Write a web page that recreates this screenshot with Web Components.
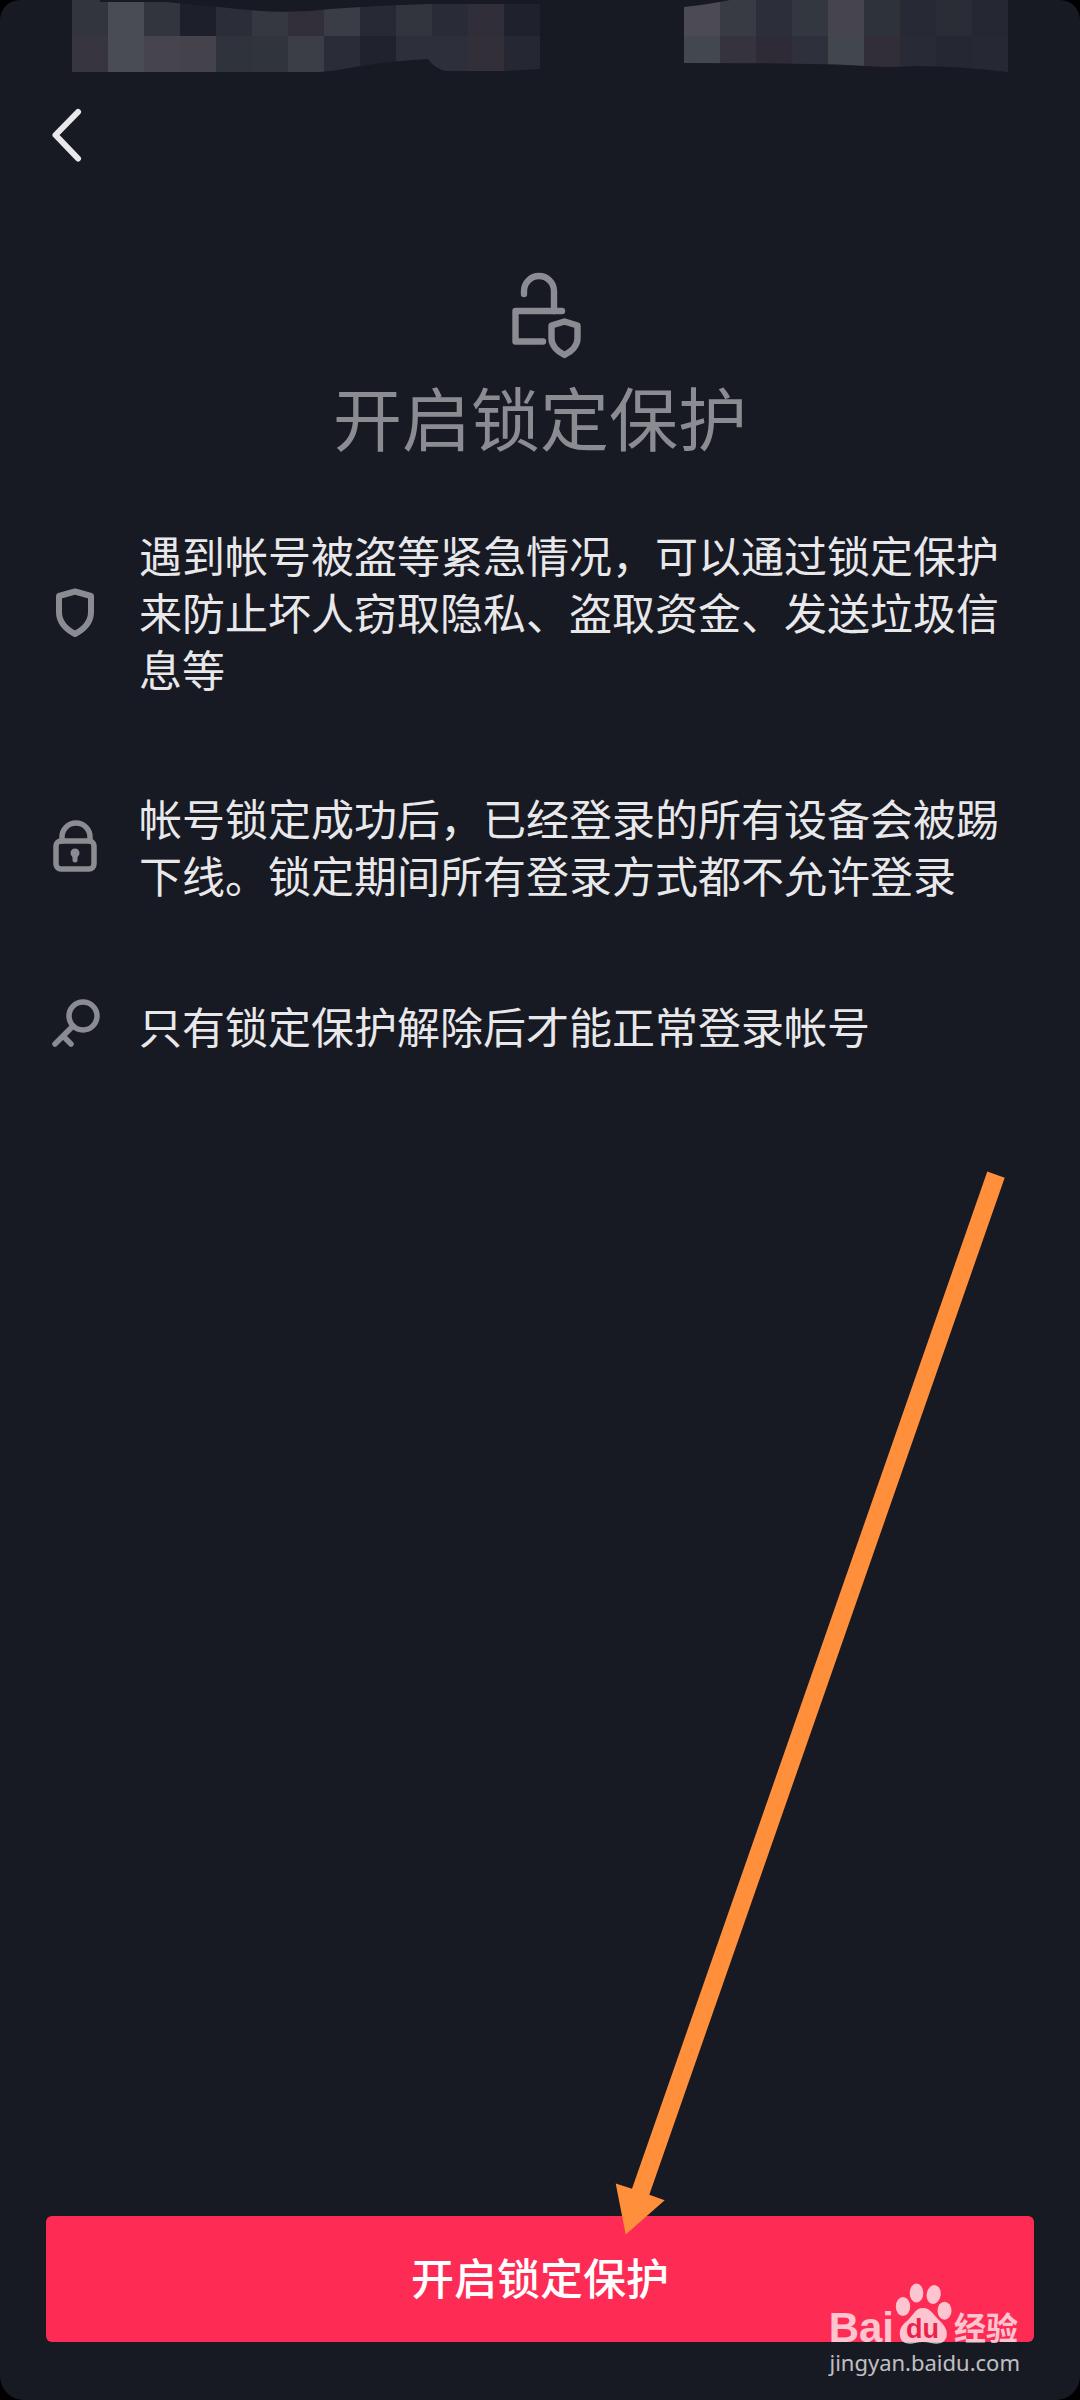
<!DOCTYPE html>
<html lang="zh-CN">
<head>
<meta charset="utf-8">
<meta name="viewport" content="width=device-width, initial-scale=1">
<title>开启锁定保护</title>
<style>
  html { background: #000; }
  body { margin: 0; min-height: 100vh; display: flex; font-family: "Noto Sans CJK SC", "Noto Sans", sans-serif; color: #e8e8ea; }
</style>
</head>
<body>
<lock-page>
  <status-strip slot="top"></status-strip>
  <back-bar slot="top"></back-bar>
  <page-hero>开启锁定保护</page-hero>
  <feature-list>
    <feature-item icon="shield">遇到帐号被盗等紧急情况，可以通过锁定保护来防止坏人窃取隐私、盗取资金、发送垃圾信息等</feature-item>
    <feature-item icon="lock">帐号锁定成功后，已经登录的所有设备会被踢下线。锁定期间所有登录方式都不允许登录</feature-item>
    <feature-item icon="key">只有锁定保护解除后才能正常登录帐号</feature-item>
  </feature-list>
  <action-button slot="bottom">开启锁定保护</action-button>
  <pointer-arrow slot="overlay"></pointer-arrow>
  <site-mark slot="overlay"></site-mark>
</lock-page>
<script>
const define = (name, html, setup) => customElements.define(name, class extends HTMLElement {
  constructor() {
    super();
    this.attachShadow({ mode: 'open' }).innerHTML = html;
  }
  connectedCallback() { if (setup) setup(this); }
});

define('lock-page', `
  <style>
    :host { position: relative; flex: 1; display: flex; flex-direction: column; min-width: 0; background: #171923; border-radius: 20px 20px 24px 24px; overflow: hidden; }
    main { flex: 1; }
    footer { padding: 0 46px 58px; }
  </style>
  <header><slot name="top"></slot></header>
  <main><slot></slot></main>
  <footer><slot name="bottom"></slot></footer>
  <slot name="overlay"></slot>`);

// Mosaic over the clock and the system icons: one colour per 36px cell, two rows.
const cells = (x, top, bottom) => [top, bottom].map((row, r) => row.map((c, i) =>
  `<rect x="${x + i * 36}" y="${r * 36}" width="36" height="36" fill="#${c}"/>`).join('')).join('');
define('status-strip', `
  <style>:host { display: block; } svg { display: block; width: 100%; height: auto; }</style>
  <svg viewBox="0 0 1080 80" shape-rendering="auto" aria-hidden="true">
    <defs>
      <clipPath id="l"><path d="M72 0H100V2H165Q220 7 250 10Q290 14 330 9Q380 5 430 4H540V69L505 71H446Q435 69 428 59Q390 61 355 67Q335 71 320 72H72Z"/></clipPath>
      <clipPath id="r"><path d="M684 7Q705 5 730 0H1008V72Q960 66 915 66Q890 68 865 66Q820 63 684 63Z"/></clipPath>
    </defs>
    <g clip-path="url(#l)">${cells(72,
      ['32353d','4a4c54','32353d','1d1f2a','2b2d38','353840','332f39','3a3d45','272a34','32353d','292b36','302e38','1f212c'],
      ['363540','4a4c54','46454e','44434c','2f333b','30343b','3b3e46','2a2c37','20232d','2d2f3a','2d2f3a','322f39','252833'])}</g>
    <g clip-path="url(#r)">${cells(684,
      ['4c4b54','383b43','2c2f3a','33373f','46444d','2e3239','272a34','2a2c36','252832'],
      ['434850','35333e','2e2b36','2e313c','42474e','312e38','282a35','252832','262933'])}</g>
  </svg>`);

define('back-bar', `
  <style>
    :host { display: flex; padding: 20px 36px; }
    button { display: flex; padding: 0; border: 0; background: none; color: #e8e8ea; cursor: pointer; }
    svg { display: block; }
  </style>
  <button type="button" aria-label="返回">
    <svg width="60" height="72" viewBox="0 0 60 72" fill="none" stroke="currentColor" stroke-width="6" stroke-linecap="round" stroke-linejoin="round"><path d="M42 12 19.500 35 42 58.500"/></svg>
  </button>`);

define('page-hero', `
  <style>
    :host { display: flex; flex-direction: column; align-items: center; gap: 2px; padding-top: 76px; color: #8b8c91; }
    svg { display: block; }
    h1 { margin: 0; font-size: 69px; line-height: 100px; font-weight: 400; }
  </style>
  <svg width="96" height="96" viewBox="0 0 96 96" fill="none" stroke="currentColor" stroke-width="6.400" stroke-linecap="round" stroke-linejoin="round" aria-hidden="true">
    <path d="M32 26v-3a15 15 0 0 1 30 0v20"/>
    <path d="M70 43H23.500V73.500H51"/>
    <path d="M72.500 53.500 85.500 57.500V70.500C85.500 77.500 79.500 83.500 72.500 87C65.500 83.500 59.500 77.500 59.500 70.500V57.500Z"/>
  </svg>
  <h1><slot></slot></h1>`);

define('feature-list', `
  <style>:host { display: flex; flex-direction: column; gap: 92px; padding: 60px 74px 0 45px; }</style>
  <slot></slot>`);

const icons = {
  shield: '<path stroke-width="6" d="M30 9.500 46 14V30C46 40 38.500 47.500 30 52C21.500 47.500 14 40 14 30V14Z"/>',
  lock: '<rect x="11" y="25" width="38" height="28" rx="5"/><path d="M17 25V21a13 13 0 0 1 28 0V25"/><circle cx="30" cy="37" r="4.500" fill="currentColor" stroke="none"/><path stroke-width="5" d="M30 38v6"/>',
  key: '<circle cx="38" cy="21" r="14"/><path d="M28 31 10 49M18 41 26 49"/>'
};
define('feature-item', `
  <style>
    :host { display: flex; align-items: center; gap: 34px; }
    svg { flex: none; display: block; color: #8b8c91; }
    p { margin: 0; font-size: 43px; line-height: 57px; }
  </style>
  <svg width="60" height="60" viewBox="0 0 60 60" fill="none" stroke="currentColor" stroke-width="5.500" stroke-linecap="round" stroke-linejoin="round" aria-hidden="true"></svg>
  <p><slot></slot></p>`,
  el => { el.shadowRoot.querySelector('svg').innerHTML = icons[el.getAttribute('icon')]; });

define('action-button', `
  <style>
    :host { display: flex; }
    button { flex: 1; padding: 29px 0 35px; border: 0; border-radius: 6px; background: #fe2c55; color: #fff; font: inherit; font-size: 43px; line-height: 62px; font-weight: 500; cursor: pointer; }
  </style>
  <button type="button"><slot></slot></button>`);

define('pointer-arrow', `
  <style>:host { position: absolute; right: 70px; bottom: 160px; pointer-events: none; } svg { display: block; }</style>
  <svg width="400" height="1075" viewBox="610 1165 400 1075" aria-hidden="true"><path fill="#ff8f3a" d="M987.300 1171.500 1004.700 1177.700 649.300 2194.700 664.700 2200.300 625.700 2234.500 615.700 2183.500 632 2188.700Z"/></svg>`);

define('site-mark', `
  <style>
    :host { position: absolute; right: 60px; bottom: 22px; display: flex; flex-direction: column; align-items: flex-end; color: #fff; opacity: .72; pointer-events: none; }
    .logo { display: flex; align-items: flex-end; padding-right: 2px; }
    .latin { font: 700 42px/36px "Liberation Sans", sans-serif; }
    .han { font-size: 32px; line-height: 40px; font-weight: 700; padding-left: 2px; }
    .url { font: 22px/32px "Noto Sans", sans-serif; }
    svg { display: block; }
  </style>
  <div class="logo">
    <span class="latin">Bai</span>
    <svg width="58" height="64" viewBox="893 2284 58 64" aria-hidden="true">
      <g fill="currentColor">
        <ellipse cx="902" cy="2308.500" rx="7.200" ry="9.500"/><ellipse cx="915.500" cy="2295" rx="6.800" ry="9.500"/>
        <ellipse cx="932.700" cy="2296.500" rx="7" ry="9.500" transform="rotate(10 932.700 2296.500)"/><ellipse cx="943.500" cy="2312.700" rx="7" ry="9"/>
        <path d="M922 2310C930 2310 933 2318 939 2323C944 2328 947 2333 945.500 2339C943 2347 935 2346 930 2345Q922 2343 914 2345C908 2346.500 900 2346 899 2338C898 2331 901 2327 906 2323C912 2318 914 2310 922 2310Z"/>
      </g>
      <text x="921.500" y="2340" text-anchor="middle" font-family="Liberation Sans, sans-serif" font-weight="700" font-size="27" fill="#e51e48">du</text>
    </svg>
    <span class="han">经验</span>
  </div>
  <span class="url">jingyan.baidu.com</span>`);
</script>
</body>
</html>
